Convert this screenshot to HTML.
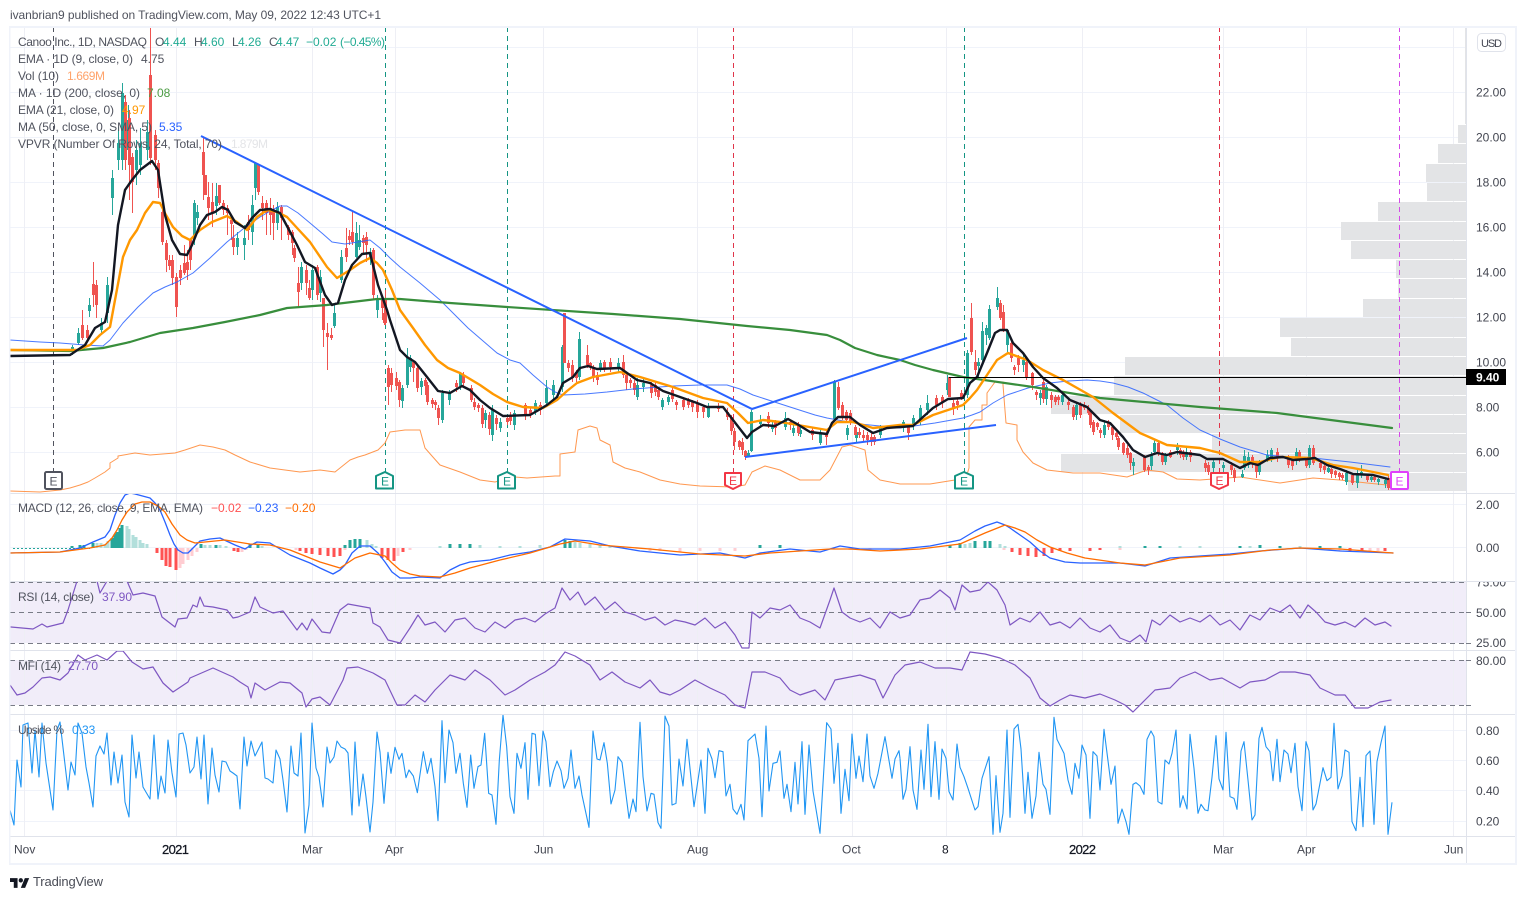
<!DOCTYPE html>
<html><head><meta charset="utf-8"><title>Canoo Chart</title>
<style>
html,body{margin:0;padding:0;background:#fff;width:1526px;height:899px;overflow:hidden}
svg{display:block}
text{font-family:"Liberation Sans",sans-serif;font-size:12px;fill:#50535e}
.t text{fill:#434651}
.l{fill:none;stroke-linejoin:round;stroke-linecap:round}
</style></head><body>
<svg width="1526" height="899" viewBox="0 0 1526 899" xmlns="http://www.w3.org/2000/svg">
<defs>
<clipPath id="main"><rect x="10" y="28" width="1456" height="465"/></clipPath>
<clipPath id="macd"><rect x="10" y="494" width="1456" height="88"/></clipPath>
<clipPath id="rsi"><rect x="10" y="582" width="1456" height="68"/></clipPath>
<clipPath id="mfi"><rect x="10" y="651" width="1456" height="63"/></clipPath>
<clipPath id="up"><rect x="10" y="715" width="1456" height="121"/></clipPath>
<clipPath id="lab75"><rect x="1467" y="582" width="48" height="20"/></clipPath>
</defs>
<text x="10" y="19" textLength="371" style="fill:#50535e">ivanbrian9 published on TradingView.com, May 09, 2022 12:43 UTC+1</text>

<!-- fills -->
<rect x="10" y="582" width="1456" height="61" fill="#f1edf9"/>
<rect x="10" y="660" width="1456" height="45" fill="#f1edf9"/>

<!-- grid -->
<path stroke="#f0f3fa" fill="none" d="M10 47.5H1466M10 92.5H1466M10 137.5H1466M10 182.5H1466M10 227.5H1466M10 272.5H1466M10 317.5H1466M10 362.5H1466M10 407.5H1466M10 452.5H1466M10 504.5H1466M10 547.5H1466M10 730.5H1466M10 760.5H1466M10 790.5H1466M10 821.5H1466"/>
<path stroke="#eeeff5" fill="none" d="M24.5 27V836M176.5 27V836M312.5 27V836M395.5 27V836M543.5 27V836M697.5 27V836M852.5 27V836M946.5 27V836M1082.5 27V836M1223.5 27V836M1306.5 27V836M1453.5 27V836"/>

<!-- VPVR -->
<g fill="#e3e4e6">
<rect x="1465" y="28" width="1" height="96"/>
<rect x="1458" y="125" width="8" height="18"/>
<rect x="1438" y="144" width="28" height="19"/>
<rect x="1426" y="164" width="40" height="18"/>
<rect x="1427" y="183" width="39" height="18"/>
<rect x="1378" y="202" width="88" height="19"/>
<rect x="1341" y="222" width="125" height="18"/>
<rect x="1351" y="241" width="115" height="18"/>
<rect x="1396" y="260" width="70" height="18"/>
<rect x="1398" y="279" width="68" height="19"/>
<rect x="1363" y="299" width="103" height="18"/>
<rect x="1280" y="318" width="186" height="19"/>
<rect x="1291" y="338" width="175" height="18"/>
<rect x="1125" y="357" width="341" height="18"/>
<rect x="1114" y="376" width="352" height="19"/>
<rect x="1051" y="396" width="415" height="18"/>
<rect x="1120" y="415" width="346" height="18"/>
<rect x="1212" y="434" width="254" height="19"/>
<rect x="1061" y="454" width="405" height="18"/>
<rect x="1348" y="473" width="118" height="18"/>
</g>

<!-- event dashed -->
<g stroke-dasharray="5 4" fill="none" stroke-width="1">
<path d="M53.5 27V471" stroke="#50535e"/>
<path d="M385.5 27V472" stroke="#149583"/>
<path d="M507.5 27V472" stroke="#149583"/>
<path d="M733.5 27V472" stroke="#e0354a"/>
<path d="M964.5 27V472" stroke="#149583"/>
<path d="M1219.5 27V472" stroke="#e0354a"/>
<path d="M1399.5 27V471" stroke="#d54be8"/>
</g>

<g clip-path="url(#main)">
<!-- volume MA -->
<polyline class="l" stroke="#ff9850" stroke-width="1" stroke-linejoin="miter" points="10,491 40,492 60,490 70,488 80,485 88,482 95,478 100,475 105,472 110,468 110,463 118,458 118,456 135,453 150,455 175,453 185,450 200,445 213,447 225,450 235,455 250,462 270,468 300,472 320,470 335,472 350,460 358,457 365,455 378,450 385,443 390,432 405,430 420,430 425,448 432,456 440,465 460,472 480,480 495,482 510,478 515,477 527,478 555,476 560,476 560,454 575,452 578,430 590,426 597,428 600,440 610,445 613,462 625,468 640,472 660,480 680,484 700,486 733,487 745,485 752,472 765,466 780,470 790,475 800,480 820,480 830,470 842,447 850,445 865,450 868,470 880,480 900,484 930,484 955,480 966,478 969,468 969,427 975,420 982,420 982,405 987,405 987,393 995,382 1003,382 1003,385 1006,423 1017,425 1017,440 1023,452 1033,463 1047,470 1073,473 1100,473 1127,477 1147,470 1163,472 1177,479 1200,480 1240,477 1280,483 1313,478 1340,480 1367,483 1387,485"/>

<g transform="translate(.5,0)">
<!-- green wicks -->
<path stroke="#26a69a" fill="none" d="M72 345V355M78 328V345M89 298V317M101 318V335M107 277V323M112 170V215M118 127V170M122 83V170M128 105V165M136 140V185M140 128V175M147 120V160M194 200V245M197 205V225M216 183V215M237 232V255M244 225V260M252 195V245M255 163V200M277 202V230M301 262V290M312 265V300M320 270V302M334 305V328M341 250V283M356 222V258M359 225V250M370 248V265M377 295V318M402 385V408M407 348V388M410 355V372M421 378V395M442 390V423M449 390V405M460 372V390M485 410V428M492 405V441M500 418V432M514 410V430M535 400V415M546 380V405M553 380V400M562 345V392M579 332V380M600 360V372M618 358V372M637 378V400M643 378V392M662 398V410M668 395V405M708 403V418M748 450V457M751 410V452M760 415V428M772 420V432M785 412V430M793 424V436M800 425V437M820 428V445M834 380V420M847 425V440M856 428V442M880 425V438M903 420V432M913 415V430M920 405V425M927 395V415M947 375V395M967 350V398M978 358V378M982 322V362M986 325V345M989 305V340M997 287V310M1007 330V352M1023 355V372M1040 390V405M1046 385V405M1062 392V405M1076 403V420M1104 420V438M1133 458V475M1151 452V470M1154 440V455M1165 453V465M1177 443V455M1186 448V460M1213 458V475M1223 462V475M1242 470V478M1244 450V470M1248 452V468M1259 460V475M1267 450V462M1271 448V462M1296 448V465M1309 445V468M1328 465V473M1346 470V485M1357 470V488M1361 465V478M1371 475V482M1378 478V485M1385 478V488"/>
<!-- red wicks -->
<path stroke="#ef5350" fill="none" d="M82 310V340M87 325V340M93 262V307M96 280V318M125 95V170M129 110V200M132 153V213M150 27V165M155 130V170M158 160V198M162 195V245M166 240V272M169 255V270M172 255V285M176 273V317M180 265V285M184 245V275M187 250V280M190 240V270M203 138V200M208 182V220M212 183V227M219 185V205M223 200V215M227 205V235M231 215V240M233 225V255M248 215V240M258 164V195M262 196V220M266 200V235M270 198V235M273 205V240M281 205V240M288 225V240M292 230V255M294 245V262M298 267V306M306 265V295M309 280V300M317 265V300M323 298V347M327 323V370M331 328V340M346 228V262M349 230V245M352 212V245M363 235V255M366 232V262M373 248V300M382 295V320M384 310V325M385 290V325M388 365V405M391 368V392M396 372V390M399 380V407M413 360V382M417 365V392M425 378V395M427 382V405M432 398V408M435 400V410M438 405V425M456 380V392M463 372V388M471 385V402M474 398V410M478 403V412M482 405V428M489 412V435M496 415V430M507 415V425M510 412V425M525 403V420M530 408V418M540 402V415M568 360V372M572 360V382M576 370V382M587 345V368M590 362V370M593 365V382M597 372V385M604 360V372M610 358V372M623 355V378M626 372V390M630 378V388M634 380V395M651 382V398M655 382V396M658 388V400M672 388V402M676 400V410M683 397V410M688 398V408M692 400V412M697 400V418M703 405V418M718 403V412M727 408V420M731 415V435M734 428V450M739 440V450M742 438V455M745 450V460M768 412V428M775 420V435M790 420V430M798 422V436M812 428V440M826 430V445M838 382V410M842 402V420M846 410V422M850 410V425M855 425V438M859 428V438M863 430V442M867 432V445M871 432V446M874 435V445M908 425V440M936 395V410M942 395V408M949 377V397M953 400V415M957 398V410M961 390V400M971 303V355M975 350V375M1000 300V320M1003 305V332M1011 340V362M1014 365V375M1018 355V372M1026 360V380M1032 372V390M1036 390V400M1043 378V403M1051 392V408M1055 395V405M1058 395V405M1068 398V410M1073 405V420M1080 402V418M1084 402V410M1088 405V415M1090 410V428M1093 420V435M1097 422V430M1100 428V438M1108 420V430M1112 425V440M1116 432V440M1118 436V450M1123 442V455M1127 445V458M1130 452V470M1144 455V472M1148 465V475M1158 440V456M1162 452V465M1170 450V458M1180 448V458M1183 450V460M1190 450V462M1205 460V472M1208 462V475M1231 462V475M1234 468V482M1252 455V468M1256 462V478M1277 448V462M1288 455V468M1292 458V470M1299 450V462M1306 458V468M1313 445V465M1320 462V472M1324 465V474M1331 468V478M1335 470V478M1339 472V480M1342 473V480M1352 473V485M1367 474V482M1374 475V482M1388 476V490"/>
<!-- green bodies -->
<path stroke="#26a69a" stroke-width="3" fill="none" d="M72 347V352M78 333V343M89 305V311M101 323V330M107 285V313M112 178V198M118 143V160M122 93V160M128 120V150M136 150V170M140 143V165M147 132V150M194 203V235M197 212V218M216 196V206M237 238V247M244 238V245M252 205V232M255 163V188M277 207V223M301 267V283M312 270V290M320 277V293M334 313V326M341 257V280M356 233V257M359 240V247M370 252V257M377 298V310M402 388V401M407 357V385M410 358V367M421 381V387M442 393V420M449 393V400M460 374V386M485 413V420M492 410V435M500 422V428M514 413V425M535 403V412M546 388V403M553 385V395M562 347V387M579 339V377M600 363V368M618 363V368M637 385V397M643 383V387M662 400V407M668 397V402M708 408V417M748 453V457M751 412V451M760 420V424M772 426V429M785 418V427M793 428V433M800 430V434M820 433V443M834 382V419M847 428V435M856 432V438M880 427V435M903 422V428M913 418V425M920 408V420M927 403V410M947 383V390M967 353V395M978 362V366M982 331V360M986 328V335M989 309V338M997 298V307M1007 330V345M1023 360V365M1040 393V398M1046 387V399M1062 395V402M1076 405V415M1104 425V435M1133 462V466M1151 455V466M1154 443V452M1165 455V462M1177 445V450M1186 452V457M1213 462V468M1223 465V468M1242 474V477M1244 456V468M1248 457V465M1259 463V472M1267 455V460M1271 450V458M1296 452V460M1309 448V465M1328 468V472M1346 473V482M1357 475V483M1361 472V475M1371 477V480M1378 479V482M1385 480V484"/>
<!-- red bodies -->
<path stroke="#ef5350" stroke-width="3" fill="none" d="M82 325V338M87 330V338M93 284V295M96 285V305M125 102V160M129 118V165M132 157V182M150 75V158M155 135V160M158 163V188M162 212V242M166 243V260M169 260V266M172 260V278M176 277V307M180 270V278M184 263V273M187 262V270M190 240V260M203 152V175M205 175V195M208 197V208M212 202V213M219 185V203M223 203V210M227 208V213M231 220V224M233 238V247M248 222V230M258 164V192M262 203V208M266 203V213M270 208V215M273 210V223M281 207V218M288 227V235M292 232V243M294 248V258M298 283V292M306 270V283M309 288V298M317 267V295M323 298V330M327 333V337M331 335V338M346 248V257M349 236V240M352 232V242M363 238V243M366 237V245M373 250V295M382 298V308M384 313V323M385 300V323M388 368V387M391 373V385M396 378V386M399 382V400M413 362V368M417 368V388M425 380V386M427 385V402M432 400V404M435 402V405M438 408V418M456 383V387M463 375V383M471 388V400M474 402V407M478 405V408M482 408V424M489 415V429M496 418V424M507 418V422M510 416V421M525 405V415M530 410V414M540 405V410M564 313V363M568 363V368M572 365V378M576 372V378M587 355V365M590 363V367M593 368V377M597 375V380M604 362V368M610 362V367M623 362V375M626 375V383M630 380V383M634 383V390M651 385V393M655 385V392M658 390V397M672 390V399M676 402V405M683 400V407M688 400V405M692 402V407M697 403V412M703 407V412M718 406V409M727 412V417M731 417V431M734 431V442M739 441V447M742 442V450M745 451V457M768 416V423M775 422V428M790 422V425M798 425V433M812 430V435M826 433V437M838 387V408M842 405V417M846 412V420M850 413V423M855 427V435M859 432V435M863 435V438M867 435V440M871 437V442M874 437V442M908 427V433M936 398V405M942 397V402M949 377V397M953 403V408M957 401V405M961 393V397M971 318V352M975 362V370M1000 303V318M1003 312V330M1011 343V358M1014 367V370M1018 358V365M1026 362V377M1032 373V385M1036 392V395M1043 382V399M1051 395V400M1055 397V402M1058 397V400M1068 402V405M1073 407V417M1080 405V415M1084 405V408M1088 408V413M1090 413V425M1093 422V432M1097 423V427M1100 430V433M1108 423V427M1112 427V435M1116 433V437M1118 438V447M1123 443V453M1127 448V455M1130 453V463M1144 457V470M1148 467V470M1158 443V453M1162 455V462M1170 452V457M1180 450V455M1183 452V457M1190 452V457M1205 463V468M1208 465V472M1231 465V470M1234 470V478M1252 457V462M1256 463V472M1277 452V458M1288 458V465M1292 460V466M1299 452V458M1306 460V466M1313 448V463M1320 463V468M1324 466V470M1331 469V474M1335 471V475M1339 473V477M1342 475V478M1352 475V483M1367 476V480M1374 477V480M1388 478V488"/>
</g>

<!-- MA 50 -->
<polyline class="l" stroke="#2962ff" stroke-width="1" stroke-opacity=".85" points="10,340 40,342 60,343 85,345 103,346 110,340 123,323 138,307 153,293 165,287 177,282 193,273 210,258 227,242 243,229 260,217 272,210 280,206 287,206 298,213 310,223 323,234 332,242 345,244 358,242 370,240 380,248 390,258 400,267 420,283 440,300 468,328 497,353 510,360 520,363 533,375 547,387 555,392 563,395 585,394 607,392 633,389 673,386 700,385 727,385 740,389 753,395 790,407 815,415 827,418 860,424 900,428 935,423 963,418 972,415 980,412 993,403 1007,395 1028,388 1050,383 1068,381 1087,380 1100,381 1113,383 1128,387 1143,393 1155,399 1167,405 1183,418 1200,430 1220,439 1240,447 1267,455 1290,457 1313,458 1350,462 1390,467"/>
<!-- MA 200 -->
<polyline class="l" stroke="#388e3c" stroke-width="2.2" points="10,350 70,351 103,348 130,342 160,333 193,328 225,322 260,315 287,308 327,305 377,299 400,299 450,303 507,307 613,314 680,319 747,326 790,330 827,335 840,340 855,348 877,355 900,360 915,365 933,370 963,377 1033,387 1100,398 1200,407 1277,413 1392,428"/>
<!-- EMA 21 -->
<polyline class="l" stroke="#ff9800" stroke-width="2.4" points="10,350 77,350 90,345 100,335 110,327 115,300 123,257 130,240 137,230 145,213 153,202 160,203 166,215 173,227 182,236 190,240 200,230 212,222 227,216 237,222 247,230 257,217 267,210 277,212 287,217 298,229 310,242 327,267 337,278 350,270 360,263 370,258 377,263 383,270 392,290 400,310 413,328 425,345 437,360 448,368 460,373 480,385 493,394 507,402 523,407 543,408 557,400 567,391 577,383 593,377 620,372 640,377 673,387 703,398 727,403 738,413 748,423 763,420 780,422 827,430 837,422 853,422 873,428 900,425 913,425 933,415 963,405 970,398 977,390 987,375 997,360 1008,353 1027,360 1043,370 1063,380 1093,397 1113,413 1140,433 1167,445 1200,448 1220,453 1240,462 1260,462 1280,457 1310,458 1333,465 1353,468 1388,475"/>
<!-- EMA 9 -->
<polyline class="l" stroke="#131722" stroke-width="2.4" points="10,356 70,355 85,345 95,328 105,322 112,290 118,225 125,190 132,180 140,170 152,161 158,170 165,215 172,240 180,254 187,255 192,245 200,225 207,215 215,212 222,207 228,210 235,222 245,228 252,218 260,210 270,209 280,213 288,228 297,245 305,262 315,268 325,295 332,305 338,303 345,280 352,265 362,254 370,253 378,285 387,310 390,320 400,350 407,357 415,362 427,377 438,391 450,393 462,386 470,390 480,400 490,408 503,416 530,415 537,411 547,405 557,397 563,383 573,377 580,368 588,366 597,369 620,368 637,380 650,383 663,391 680,397 697,403 707,407 723,407 733,420 747,438 752,432 763,425 775,426 788,419 797,424 810,432 827,434 832,423 838,417 850,417 860,425 873,433 887,428 900,427 913,426 933,408 948,399 963,398 970,383 977,377 987,353 995,333 1000,330 1007,330 1013,343 1023,353 1033,367 1043,378 1057,388 1070,400 1087,407 1100,420 1110,423 1123,437 1133,450 1145,457 1157,453 1167,455 1177,452 1200,455 1207,459 1223,459 1240,468 1250,463 1258,465 1270,458 1283,457 1293,460 1307,459 1315,458 1327,465 1340,469 1353,474 1373,475 1388,479"/>
<!-- trend lines -->
<path d="M201 136L752 409L967 338M745 457L996 425" stroke="#2962ff" stroke-width="2" fill="none"/>
<path d="M949 377.5H1466" stroke="#000" stroke-width="1" fill="none"/>
</g>

<!-- E badges -->
<g fill="#fff" stroke-width="2" stroke-linejoin="round">
<rect x="45" y="472" width="17" height="17" rx="1.5" stroke="#50535e"/>
<path d="M376 476L385 472L393 476V488.500H376Z" stroke="#149583"/>
<path d="M507 472L515 476V488.500H498V476Z" stroke="#149583"/>
<path d="M725 473H741V485L733 489L725 485Z" stroke="#f23645"/>
<path d="M964 472L973 476V488.500H955V476Z" stroke="#149583"/>
<path d="M1211 473H1228V485L1219 489L1211 485Z" stroke="#f23645"/>
<rect x="1391" y="472" width="17" height="17" rx="1" stroke="#e040fb"/>
</g>
<g font-weight="400" text-anchor="middle">
<text x="53.500" y="485.500" style="fill:#50535e" font-size="13">E</text>
<text x="385" y="485.500" style="fill:#149583">E</text>
<text x="507" y="485.500" style="fill:#149583">E</text>
<text x="733" y="485" style="fill:#f23645">E</text>
<text x="964" y="485.500" style="fill:#149583">E</text>
<text x="1219.500" y="485" style="fill:#f23645">E</text>
<text x="1399.500" y="485.500" style="fill:#e040fb">E</text>
</g>

<!-- MACD -->
<g clip-path="url(#macd)">
<path d="M13 548.500H90" stroke="#26a69a" stroke-dasharray="2 2" fill="none"/>
<g stroke-width="3" fill="none">
<path stroke="#26a69a" d="M72 548V546M80 548V545M84 548V545M93 548V543M112 548V538M115 548V534M117 548V532M120 548V528M122 548V525M201 548V544M216 548V545M250 548V544M258 548V545M345 548V545M350 548V540M355 548V539M360 548V539M450 548V544M460 548V544M470 548V544M565 548V540M570 548V541M760 548V545M780 548V545M950 548V545M960 548V543M975 548V541M985 548V541M990 548V541M1145 548V546M1160 548V546M1240 548V546M1260 548V545M1280 548V546M1320 548V546M1340 548V546"/>
<path stroke="#b2dfdb" d="M97 548V543M101 548V543M105 548V544M108 548V541M127 548V526M129 548V529M133 548V535M136 548V537M140 548V540M143 548V543M147 548V544M205 548V545M210 548V545M220 548V545M226 548V546M262 548V546M367 548V540M372 548V544M376 548V546M440 548V546M480 548V545M500 548V546M520 548V546M540 548V545M575 548V542M580 548V543M590 548V544M600 548V545M610 548V546M965 548V544M970 548V543M1000 548V544M1005 548V546M1120 548V546M1180 548V546M1200 548V546M1250 548V546M1300 548V546"/>
<path stroke="#ff5252" d="M157 548V553M162 548V560M166 548V566M170 548V567M176 548V570M234 548V551M238 548V552M300 548V551M306 548V553M312 548V554M320 548V555M328 548V556M334 548V557M340 548V556M382 548V558M388 548V560M394 548V561M403 548V552M1012 548V552M1020 548V555M1028 548V556M1036 548V557M1044 548V556M1052 548V553M1060 548V551M1070 548V551M1090 548V551M1100 548V550M1350 548V551M1362 548V551M1385 548V551"/>
<path stroke="#ffcdd2" d="M180 548V568M183 548V564M188 548V560M192 548V556M197 548V552M242 548V552M246 548V550M296 548V550M345 548V550M398 548V556M410 548V550M650 548V551M660 548V551M680 548V552M700 548V551M720 548V551M735 548V551M850 548V550M870 548V550M1004 548V550M1120 548V550M1330 548V550M1340 548V551M1370 548V551M1378 548V551"/>
</g>
<polyline class="l" stroke="#2962ff" stroke-width="1.3" points="10,553 60,552 80,548 93,542 105,537 110,530 115,515 120,503 125,495 130,493 135,494 150,498 155,503 160,510 165,522 170,535 174,544 178,550 183,553 188,553 194,547 200,541 210,539 220,538 235,545 245,549 251,545 257,542 270,543 280,549 290,555 310,563 320,568 333,574 340,570 345,565 352,553 360,546 370,546 378,553 385,562 392,572 400,578 410,578 420,577 440,578 450,570 460,565 470,562 490,560 510,555 530,552 550,547 565,539 590,541 610,546 640,551 680,555 720,553 745,558 760,553 790,549 820,552 840,546 860,549 900,549 930,546 960,540 975,531 985,526 997,522 1005,525 1010,528 1020,535 1030,542 1040,551 1050,558 1065,562 1080,563 1120,563 1145,566 1170,558 1200,556 1230,554 1260,551 1300,548 1340,551 1393,553"/>
<polyline class="l" stroke="#ff6d00" stroke-width="1.3" points="10,553 60,552 90,548 105,545 112,538 117,530 122,520 127,512 135,504 142,502 150,502 158,506 165,512 172,524 180,535 187,540 195,543 225,540 250,544 270,545 290,550 305,556 320,562 340,568 355,558 370,553 385,556 392,563 400,570 410,574 420,576 440,577 455,573 470,568 500,560 530,553 560,544 575,541 600,545 650,549 700,554 745,556 770,553 800,551 830,549 850,549 880,551 920,549 960,544 985,533 1005,525 1015,528 1025,532 1037,540 1050,547 1067,553 1085,558 1120,563 1145,565 1180,558 1230,555 1270,550 1300,548 1340,549 1393,553"/>
</g>

<!-- RSI -->
<g fill="none" stroke="#787b86" stroke-dasharray="5 4">
<path d="M10 582.500H1466M10 612.500H1466M10 643.500H1466M10 660.500H1466M10 705.500H1466"/>
</g>
<g clip-path="url(#rsi)">
<polyline class="l" stroke="#7e57c2" stroke-width="1.200" points="11,627 33,629 42,624 47,627 63,623 68,610 77,581 83,581 97,581 100,593 107,581 127,581 133,595 143,593 155,596 162,617 175,627 178,619 187,618 193,605 197,607 200,597 204,606 213,607 227,610 233,618 238,617 250,612 255,597 260,607 273,613 283,611 297,630 302,623 307,630 312,619 322,632 330,633 340,610 348,604 370,608 373,623 380,627 388,640 400,643 410,628 418,615 425,625 435,622 445,632 455,620 465,618 475,628 485,632 495,622 505,628 515,620 525,618 535,622 545,614 555,608 562,588 570,600 578,592 585,605 595,597 605,610 615,602 625,612 635,615 645,620 655,617 665,625 675,620 685,622 695,625 705,618 715,628 725,622 735,635 742,648 749,648 752,612 760,618 770,608 780,610 790,605 800,618 810,622 820,628 830,600 834,588 842,612 850,618 860,622 870,618 880,628 890,612 900,618 910,615 920,600 930,598 940,590 950,598 955,610 962,585 970,592 980,590 988,582 997,590 1005,605 1010,625 1020,618 1030,622 1040,612 1050,625 1060,622 1070,628 1080,618 1090,628 1100,632 1110,625 1120,638 1130,642 1140,635 1146,642 1152,620 1160,625 1170,615 1180,622 1190,618 1200,622 1210,615 1220,625 1230,620 1240,630 1250,615 1260,620 1270,608 1280,612 1290,605 1300,618 1308,605 1316,612 1325,622 1335,625 1345,622 1355,627 1365,618 1375,625 1385,622 1391,626"/>
</g>

<!-- MFI -->
<g clip-path="url(#mfi)">
<polyline class="l" stroke="#7e57c2" stroke-width="1.200" points="10,685 17,695 25,693 33,687 42,678 50,677 60,680 68,673 78,655 85,660 97,655 107,660 117,651 123,651 132,662 143,669 153,667 163,683 173,692 188,682 190,678 213,668 233,677 240,682 248,687 251,698 255,683 265,690 280,682 290,683 302,693 306,707 312,699 320,697 330,705 343,680 347,668 358,667 373,673 385,680 397,705 405,705 415,695 425,702 435,690 450,675 465,680 475,670 490,680 505,695 515,690 530,680 545,672 555,665 565,652 575,656 590,665 600,680 612,672 625,682 640,688 650,680 660,692 670,695 680,690 695,680 710,688 725,695 735,705 745,708 752,672 765,672 780,678 790,690 800,695 815,690 825,700 835,680 845,678 860,675 875,680 883,698 895,675 905,665 920,662 935,668 950,668 962,670 970,652 985,654 1000,658 1015,665 1030,678 1040,698 1050,706 1060,700 1070,695 1085,698 1100,694 1115,700 1125,705 1133,712 1145,700 1155,690 1170,688 1180,678 1195,672 1210,680 1222,678 1240,688 1250,682 1265,680 1280,672 1295,672 1310,675 1320,688 1335,695 1345,695 1355,708 1368,708 1380,702 1391,700"/>
</g>

<!-- Upside -->
<g clip-path="url(#up)" fill="none" stroke="#2196f3" stroke-width="1.100" stroke-linejoin="round">
<polyline points="10,810 14,825 17,760 21,787 23,725 28,723 32,773 35,730 39,777 42,723 46,763 53,810 57,730 60,722 68,790 71,762 75,775 78,723 82,733 86,767 89,783 93,807 96,756 100,746 104,754 107,733 111,785 114,752 118,783 122,755 125,802 129,817 132,735 136,778 139,752 143,787 150,799 154,735 158,799 161,776 165,793 168,740 172,773 176,797 179,734 183,733 186,745 190,773 194,767 197,737 201,779 204,735 208,804 212,748 215,775 219,792 222,761 226,762 230,771 233,773 237,776 240,809 244,737 247,766 251,741 255,756 262,742 265,778 268,779 273,783 276,750 280,759 283,780 287,812 291,746 294,773 298,776 301,733 305,833 309,805 312,723 316,768 319,777 323,807 327,747 330,763 334,757 337,741 341,747 345,749 348,753 352,815 355,742 359,806 363,774 366,797 370,832 373,802 377,732 380,752"/>
<polyline vector-effect="non-scaling-stroke" transform="translate(380,700) scale(.33333)" points="0,155 12,310 24,157 33,220 45,142 57,178 66,160 78,233 87,210 100,228 112,278 130,155 142,220 153,175 165,260 174,362 186,62 195,248 207,90 219,128 228,220 240,160 250,250 261,322 272,165 282,265 294,200 303,195 314,100 326,280 336,285 348,373 358,180 369,45 380,140 390,290 402,340 411,160 423,205 435,128 444,298 456,100 466,103 477,257 489,93 498,125 510,260 520,215 531,183 543,212 552,265 564,235 573,150 585,265 597,228 606,285 627,382 639,93 651,177 660,180 672,128 682,190 693,312 705,270 714,170 726,187 735,260 747,355 759,297 768,335 780,67 789,230 801,333 813,280 822,283 834,368 843,385 855,48 867,78 876,315 888,310 897,177 909,258 921,118 930,205 942,320 963,180 975,340 984,145 996,177 1005,233 1017,152 1029,155 1038,288 1050,253 1059,327 1071,343 1083,313 1092,360 1104,122 1125,102 1137,175 1146,350 1158,78 1167,273 1179,190 1191,187 1200,153 1212,295 1221,253 1233,335 1245,187 1254,312 1266,125 1275,343 1287,135 1299,273 1320,400 1340,68 1353,87 1362,250 1374,130 1383,340 1395,208 1407,302 1416,102 1428,235 1437,168 1449,245 1461,102 1470,228 1482,265 1494,220 1515,110 1536,235 1545,177 1557,152 1560,175"/>
<polyline vector-effect="non-scaling-stroke" transform="translate(900,700) scale(.33333)" points="0,175 9,298 18,268 30,140 39,270 51,328 63,150 72,268 84,73 93,290 105,125 117,298 126,147 138,175 147,275 159,300 171,132 180,202 192,230 204,265 225,330 234,320 246,235 267,170 279,403 288,227 300,397 309,340 321,90 330,352 342,87 354,73 363,147 375,340 384,217 396,355 408,288 417,157 429,253 438,268 450,343 462,52 471,118 492,160 504,240 516,283 525,190 537,235 546,135 558,165 570,355 579,155 591,168 600,270 612,88 633,253 645,198 654,370 666,327 678,365 687,403 699,253 708,248 720,258 732,283 741,118 753,93 762,110 774,305 786,312 795,180 807,192 816,160 828,90 840,322 849,287 861,327 870,103 882,205 894,340 903,313 915,330 924,332 936,232 948,107 957,237 969,270 978,97 990,290 1002,295 1011,328 1023,153 1032,125 1044,240 1056,360 1065,345 1077,115 1086,82 1098,140 1110,155 1119,242 1131,118 1140,245 1152,150 1164,162 1173,218 1185,130 1194,260 1206,332 1218,125 1227,153 1239,330 1248,312 1269,203 1281,242 1293,232 1302,70 1314,267 1326,228 1335,150 1347,157 1356,365 1368,392 1380,232 1389,380 1398,167 1410,153 1422,373 1431,185 1443,128 1455,78 1464,403 1476,307"/>
</g>

<!-- frame & separators -->
<path fill="none" stroke="#e0e3eb" stroke-width="1" d="M10 493.500H1516M10 581.500H1516M10 650.500H1516M10 714.500H1516M10 836.500H1516M1466.500 27V863"/>
<rect x="9" y="26" width="1508" height="2" fill="#f0f3fa"/>
<rect x="9" y="863" width="1508" height="2" fill="#f0f3fa"/>
<rect x="9" y="26" width="1.500" height="839" fill="#f0f3fa"/>
<rect x="1515" y="26" width="2" height="839" fill="#f0f3fa"/>
<path stroke="#787b86" d="M1466 612.500h5M1466 643.500h5M1466 660.500h5M1466 705.500h5" fill="none"/>

<!-- price labels -->
<g class="t">
<text x="1476" y="96.500">22.00</text>
<text x="1476" y="141.500">20.00</text>
<text x="1476" y="186.500">18.00</text>
<text x="1476" y="231.500">16.00</text>
<text x="1476" y="276.500">14.00</text>
<text x="1476" y="321.500">12.00</text>
<text x="1476" y="366.500">10.00</text>
<text x="1476" y="411.500">8.00</text>
<text x="1476" y="456.500">6.00</text>
<text x="1476" y="509">2.00</text>
<text x="1476" y="552">0.00</text>
<text x="1476" y="586.500" clip-path="url(#lab75)">75.00</text>
<text x="1476" y="617">50.00</text>
<text x="1476" y="647">25.00</text>
<text x="1476" y="665">80.00</text>
<text x="1476" y="735">0.80</text>
<text x="1476" y="765">0.60</text>
<text x="1476" y="795">0.40</text>
<text x="1476" y="825.500">0.20</text>
</g>
<rect x="1477.500" y="33.500" width="28" height="18" rx="4" fill="#fff" stroke="#e0e3eb"/>
<text x="1481" y="47" textLength="21" style="fill:#434651;font-size:11px">USD</text>
<rect x="1466" y="369" width="40" height="16" fill="#000"/>
<text x="1476" y="381.500" style="fill:#fff;font-weight:700">9.40</text>

<!-- time axis -->
<g class="t">
<text x="14" y="853.500">Nov</text>
<text x="162" y="854" textLength="27" style="fill:#131722;font-size:13px;stroke:#131722;stroke-width:.25">2021</text>
<text x="302" y="853.500">Mar</text>
<text x="385" y="853.500">Apr</text>
<text x="534" y="853.500">Jun</text>
<text x="687" y="853.500">Aug</text>
<text x="842" y="853.500">Oct</text>
<text x="942" y="853.500" style="fill:#131722">8</text>
<text x="1069" y="854" textLength="27" style="fill:#131722;font-size:13px;stroke:#131722;stroke-width:.25">2022</text>
<text x="1213" y="853.500">Mar</text>
<text x="1297" y="853.500">Apr</text>
<text x="1444" y="853.500">Jun</text>
</g>

<!-- legend -->
<text x="18" y="46" textLength="129">Canoo Inc., 1D, NASDAQ</text>
<text x="155" y="46">O</text><text x="163" y="46" style="fill:#22ab94">4.44</text>
<text x="194" y="46">H</text><text x="201" y="46" style="fill:#22ab94">4.60</text>
<text x="232" y="46">L</text><text x="238" y="46" style="fill:#22ab94">4.26</text>
<text x="269" y="46">C</text><text x="276" y="46" style="fill:#22ab94">4.47</text>
<text x="306" y="46" style="fill:#22ab94">−0.02</text>
<text x="340" y="46" textLength="45" style="fill:#22ab94">(−0.45%)</text>
<text x="18" y="63" textLength="115">EMA · 1D (9, close, 0)</text><text x="141" y="63">4.75</text>
<text x="18" y="80" textLength="41">Vol (10)</text><text x="67" y="80" textLength="38" style="fill:#ffa36b">1.669M</text>
<text x="18" y="97" textLength="122">MA · 1D (200, close, 0)</text><text x="147" y="97" style="fill:#4c9c44">7.08</text>
<text x="18" y="114" textLength="96">EMA (21, close, 0)</text><text x="122" y="114" style="fill:#ff9800">4.97</text>
<text x="18" y="131" textLength="134">MA (50, close, 0, SMA, 5)</text><text x="159" y="131" style="fill:#2962ff">5.35</text>
<text x="18" y="148" textLength="204">VPVR (Number Of Rows, 24, Total, 70)</text><text x="231" y="148" textLength="37" style="fill:#e4e5e8">1.879M</text>
<text x="18" y="512" textLength="185">MACD (12, 26, close, 9, EMA, EMA)</text>
<text x="211" y="512" style="fill:#ff5252">−0.02</text><text x="248" y="512" style="fill:#2962ff">−0.23</text><text x="285" y="512" style="fill:#ff6d00">−0.20</text>
<text x="18" y="601" textLength="76">RSI (14, close)</text><text x="102" y="601" style="fill:#7e57c2">37.90</text>
<text x="18" y="670" textLength="43">MFI (14)</text><text x="68" y="670" style="fill:#7e57c2">27.70</text>
<text x="18" y="734" textLength="46">Upside %</text><text x="72" y="734" style="fill:#2196f3">0.33</text>

<!-- footer logo -->
<g transform="translate(10,876) scale(.54)" fill="#131722">
<path d="M14 22H7V11H0V4h14v18zM28 22h-8l7.5-18h8L28 22z"/><circle cx="20" cy="8" r="4"/>
</g>
<text x="33" y="886" textLength="70" style="fill:#4a4d57;font-size:13px">TradingView</text>
</svg>
</body></html>
